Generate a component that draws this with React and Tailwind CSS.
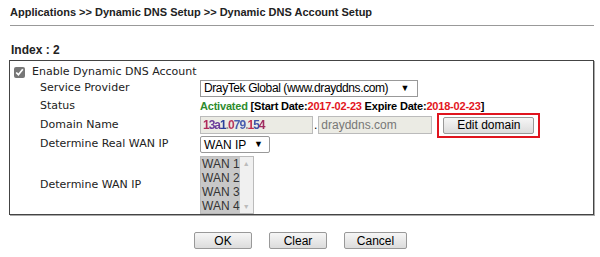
import React from "react";

const label = "whitespace-nowrap text-[11px] text-[#222] [font-family:'DejaVu_Sans',Verdana,sans-serif]";
const arial = "[font-family:'Liberation_Sans',Arial,sans-serif]";

const Caret = () => <span className="text-[9px] leading-none text-black">▼</span>;

const Row = ({ name, children, className = "" }) => (
  <div className={`flex items-center ${className}`}>
    <div className={`w-[160px] shrink-0 ${label}`}>{name}</div>
    <div className="flex items-center whitespace-nowrap">{children}</div>
  </div>
);

const DnsAccountSetup = () => {
  const wans = ["WAN 1", "WAN 2", "WAN 3", "WAN 4"];

  return (
    <div className={`h-[257px] w-[600px] overflow-hidden bg-white ${arial}`}>
      <div className="pl-[10px] pr-[6px] pt-[5px]">
        <h1 className="border-b border-[#999] pb-[6px] text-[11px] font-bold leading-[14px] text-[#222]">
          Applications &gt;&gt; Dynamic DNS Setup &gt;&gt; Dynamic DNS Account Setup
        </h1>
      </div>

      <div className="pl-[11px] pt-[17px] text-[12px] font-bold leading-[15px] text-[#222]">
        Index : 2
      </div>

      <div className="ml-[9px] mt-[2px] h-[155px] w-[585px] border border-[#444] shadow-[1px_1px_0_#aaa]">
        <div className="flex h-[18px] items-center pl-[4px] pt-[5px]">
          <input
            type="checkbox"
            defaultChecked
            className="m-0 h-[11px] w-[11px] accent-[#777]"
          />
          <span className={`ml-[7px] ${label}`}>Enable Dynamic DNS Account</span>
        </div>

        <div className="pl-[30px]">
          <Row name="Service Provider" className="h-[18px]">
            <div className="flex h-[17px] w-[218px] items-center justify-between border border-[#999] bg-white pl-[3px] pr-[8px] text-[12px] tracking-[-0.4px] text-black">
              <span>DrayTek Global (www.drayddns.com)</span>
              <Caret />
            </div>
          </Row>

          <Row name="Status" className="h-[19px]">
            <span className="text-[11px] font-bold tracking-[-0.2px] text-black">
              <span className="text-[#2e8b2e]">Activated</span> [Start Date:
              <span className="text-[#e3151c]">2017-02-23</span> Expire Date:
              <span className="text-[#e3151c]">2018-02-23</span>]
            </span>
          </Row>

          <Row name="Domain Name" className="h-[18px]">
            <div className="flex h-[18px] w-[113px] items-center border border-[#bbb] bg-[#ebebe4] pl-[2px] text-[12px] font-bold tracking-[-1px] blur-[0.4px]">
              <span className="text-[#b0285a]">1</span>
              <span className="text-[#6a3a9a]">3a</span>
              <span className="text-[#2a3f9c]">1</span>
              <span className="text-[#999]">.</span>
              <span className="text-[#b8365e]">0</span>
              <span className="text-[#4a5fb0]">79</span>
              <span className="text-[#999]">.</span>
              <span className="text-[#c03050]">1</span>
              <span className="text-[#3f54a8]">5</span>
              <span className="text-[#a02c60]">4</span>
            </div>
            <span className="mx-[1px] text-[12px] text-black">.</span>
            <div className="flex h-[18px] w-[114px] items-center border border-[#bbb] bg-[#ebebe4] pl-[2px] text-[12px] text-[#777]">
              drayddns.com
            </div>
            <div className="ml-[5px] flex h-[25px] w-[103px] items-center justify-center border-2 border-[#e0141e]">
              <button className="h-[17px] w-[91px] rounded-[2px] border border-[#999] bg-gradient-to-b from-[#f6f6f6] to-[#dcdcdc] text-[12px] leading-none text-black">
                Edit domain
              </button>
            </div>
          </Row>

          <Row name="Determine Real WAN IP" className="h-[21px]">
            <div className="flex h-[17px] w-[70px] items-center justify-between rounded-[2px] border border-[#999] bg-white pl-[3px] pr-[6px] text-[12px] text-black">
              <span>WAN IP</span>
              <Caret />
            </div>
          </Row>

          <Row name="Determine WAN IP" className="h-[60px]">
            <div className="flex h-[58px] w-[54px] border border-[#bbb]">
              <div className="flex flex-1 flex-col bg-[#c8c8c8] pl-[1px] text-[12px] leading-[14px] text-[#333]">
                {wans.map((w) => (
                  <span key={w}>{w}</span>
                ))}
              </div>
              <div className="flex w-[16px] flex-col items-center justify-between bg-[#f0f0f0] py-[3px] text-[7px] leading-none text-[#bbb]">
                <span>▲</span>
                <span>▼</span>
              </div>
            </div>
          </Row>
        </div>
      </div>

      <div className="mt-[17px] flex justify-center gap-[17px] pl-[1px]">
        {["OK", "Clear", "Cancel"].map((b) => (
          <button
            key={b}
            className={`h-[17px] rounded-[2px] border border-[#999] bg-gradient-to-b from-[#f6f6f6] to-[#dcdcdc] text-[12px] leading-none text-black ${
              b === "Cancel" ? "w-[63px]" : "w-[58px]"
            }`}
          >
            {b}
          </button>
        ))}
      </div>
    </div>
  );
};

export default function App() {
  return <DnsAccountSetup />;
}
